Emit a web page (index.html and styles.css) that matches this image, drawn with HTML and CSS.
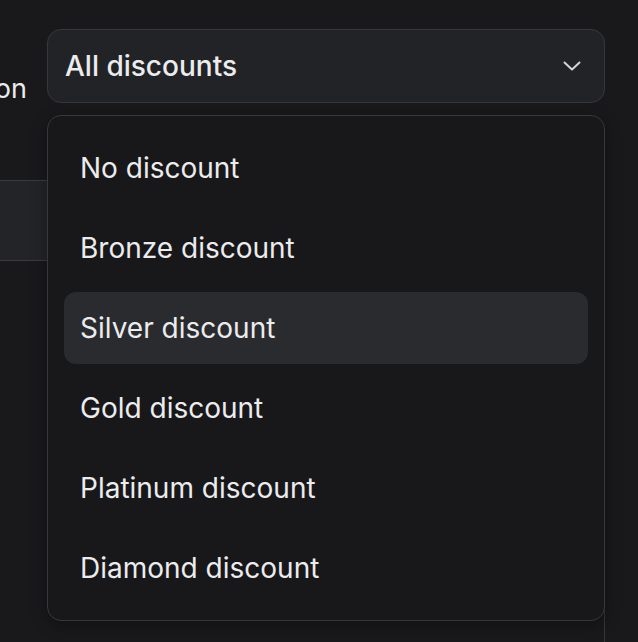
FILE: index.html
```html
<!DOCTYPE html>
<html lang="en">
<head>
<meta charset="UTF-8" />
<meta name="viewport" content="width=device-width, initial-scale=1" />
<title>Discounts</title>
<link rel="stylesheet" href="styles.css">
</head>
<body>
<main class="page">
  <div class="filter-row">
    <label class="filter-label" for="discount"><span>Discount option</span></label>
    <div class="select">
      <button class="select-trigger" id="discount">
        <span>All discounts</span>
        <svg class="chevron" width="18" height="10" viewBox="0 0 18 10" fill="none">
          <path d="M1.5 1.5 L9 8.5 L16.5 1.5" stroke="#d4d4d6" stroke-width="2" stroke-linecap="round" stroke-linejoin="round"/>
        </svg>
      </button>
      <ul class="select-menu">
        <li class="option">No discount</li>
        <li class="option">Bronze discount</li>
        <li class="option active">Silver discount</li>
        <li class="option">Gold discount</li>
        <li class="option">Platinum discount</li>
        <li class="option">Diamond discount</li>
      </ul>
    </div>
  </div>

  <div class="table">
    <div class="table-head"></div>
    <div class="table-body"></div>
  </div>
</main>
</body>
</html>
```

FILE: styles.css
```css
body {
  font-family: Inter, "Noto Sans", sans-serif;
  background: #19191c;
  color: #ececee;
  margin: 0;
  padding: 0;
  overflow: hidden;
}
.page {
  padding: 29px 33px 0 0;
}
.filter-row {
  display: flex;
  gap: 20px;
}
.filter-label {
  flex: 0 0 27px;
  min-width: 0;
  display: flex;
  justify-content: flex-end;
  align-self: flex-end;
  white-space: nowrap;
  font-size: 27px;
  line-height: 32px;
  margin-bottom: -2px;
}
.filter-label span {
  flex: none;
}
.select {
  flex: 1;
  position: relative;
}
.select-trigger {
  width: 100%;
  height: 74px;
  display: flex;
  align-items: center;
  justify-content: space-between;
  padding: 0 23px 0 17px;
  background: #222326;
  border: 1px solid #37383c;
  border-radius: 14px;
  color: #ececee;
  font-family: inherit;
  font-size: 28px;
  font-weight: 500;
  box-sizing: border-box;
}
.select-menu {
  position: absolute;
  top: calc(100% + 12px);
  left: 0;
  right: 0;
  z-index: 2;
  margin: 0;
  list-style: none;
  padding: 16px;
  display: flex;
  flex-direction: column;
  gap: 8px;
  background: #18181b;
  border: 1px solid #37383c;
  border-radius: 14px;
  box-shadow: 0 4px 16px rgba(0, 0, 0, 0.35);
}
.option {
  height: 72px;
  display: flex;
  align-items: center;
  padding: 0 16px;
  border-radius: 12px;
  font-size: 28px;
  font-weight: 400;
}
.option.active {
  background: #2a2b2f;
}
.table {
  margin-top: 77px;
  border-right: 1px solid #37383c;
  height: 462px;
}
.table-head {
  height: 79px;
  background: #232428;
  border-top: 1px solid #3a3b3f;
  border-bottom: 1px solid #3a3b3f;
}
```
